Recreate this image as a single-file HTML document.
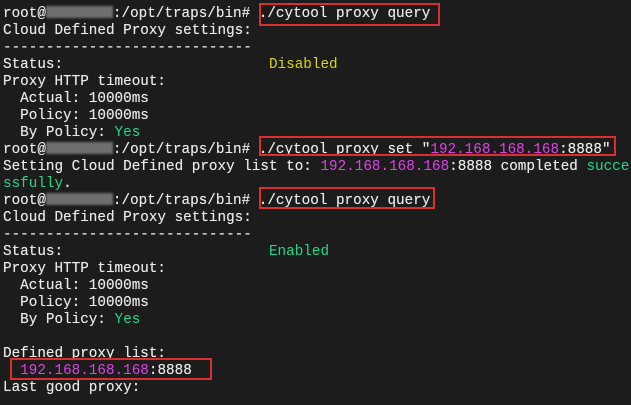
<!DOCTYPE html>
<html><head><meta charset="utf-8"><style>
html,body{margin:0;padding:0;background:#1c1c1c;width:631px;height:405px;overflow:hidden;}
pre{position:absolute;left:3px;top:6px;margin:0;font-family:"Liberation Mono","DejaVu Sans Mono",monospace;font-size:14.3px;line-height:17px;color:#e8e8e8;white-space:pre;text-shadow:0 0 0.4px #e8e8e8;}
.y{color:#d8d800;text-shadow:none}.g{color:#1fd98a;text-shadow:none}.m{color:#e040e8;text-shadow:none}
.b{display:inline-block;width:67px;height:12px;background:#6e6e6e;vertical-align:-1px;filter:blur(1px);}
.r{position:absolute;border:2px solid #d83030;box-sizing:border-box;}
</style></head><body>
<pre>root@<span class="b"></span>:/opt/traps/bin# ./cytool proxy query
Cloud Defined Proxy settings:
-----------------------------
Status:                        <span class="y">Disabled</span>
Proxy HTTP timeout:
  Actual: 10000ms
  Policy: 10000ms
  By Policy: <span class="g">Yes</span>
root@<span class="b"></span>:/opt/traps/bin# ./cytool proxy set "<span class="m">192.168.168.168</span>:8888"
Setting Cloud Defined proxy list to: <span class="m">192.168.168.168</span>:8888 completed <span class="g">succe</span>
<span class="g">ssfully</span>.
root@<span class="b"></span>:/opt/traps/bin# ./cytool proxy query
Cloud Defined Proxy settings:
-----------------------------
Status:                        <span class="g">Enabled</span>
Proxy HTTP timeout:
  Actual: 10000ms
  Policy: 10000ms
  By Policy: <span class="g">Yes</span>

Defined proxy list:
  <span class="m">192.168.168.168</span>:8888
Last good proxy:</pre>
<div class="r" style="left:259px;top:3px;width:181px;height:23px"></div>
<div class="r" style="left:259px;top:136px;width:357px;height:20px"></div>
<div class="r" style="left:259px;top:187px;width:176px;height:22px"></div>
<div class="r" style="left:10px;top:358px;width:202px;height:22px"></div>
</body></html>
